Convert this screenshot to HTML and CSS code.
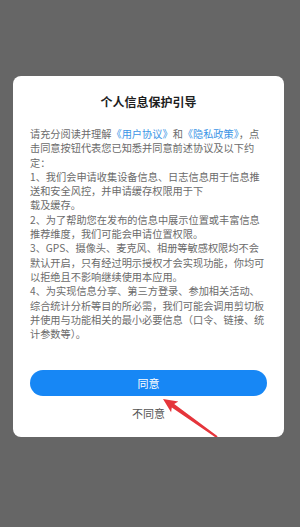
FILE: index.html
```html
<!DOCTYPE html>
<html lang="zh-CN">
<head>
<meta charset="utf-8">
<title>个人信息保护引导</title>
<link rel="stylesheet" href="styles.css">
</head>
<body>
<div class="dialog">
  <h1 class="title">个人信息保护引导</h1>
  <p class="content">请充分阅读并理解<span class="link">《用户协议》</span>和<span class="link">《隐私政策》</span>，点<br>击同意按钮代表您已知悉并同意前述协议及以下约<br>定：<br>1、我们会申请收集设备信息、日志信息用于信息推<br>送和安全风控，并申请缓存权限用于下<br>载及缓存。<br>2、为了帮助您在发布的信息中展示位置或丰富信息<br>推荐维度，我们可能会申请位置权限。<br>3、GPS、摄像头、麦克风、相册等敏感权限均不会<br>默认开启，只有经过明示授权才会实现功能，你均可<br>以拒绝且不影响继续使用本应用。<br>4、为实现信息分享、第三方登录、参加相关活动、<br>综合统计分析等目的所必需，我们可能会调用剪切板<br>并使用与功能相关的最小必要信息（口令、链接、统<br>计参数等）。</p>
  <button class="agree">同意</button>
  <div class="disagree">不同意</div>
  <svg class="arrow" width="271" height="361" viewBox="0 0 271 361">
    <polygon points="150,323 165.3,325.6 161.2,327.9 204.6,360.2 203.4,362 158.8,331.5 158.1,336.2" fill="#e5353b"/>
  </svg>
</div>
</body>
</html>
```

FILE: styles.css
```css
html, body {
  margin: 0;
  padding: 0;
}
body {
  background: #666666;
  width: 300px;
  height: 527px;
  font-family: "Noto Sans CJK SC", "Noto Sans", sans-serif;
}
.dialog {
  position: relative;
  overflow: hidden;
  box-sizing: border-box;
  margin: 76px 0 0 13px;
  width: 271px;
  height: 361px;
  background: #ffffff;
  border-radius: 8px;
  padding: 18px 17px 0;
  display: flex;
  flex-direction: column;
  align-items: stretch;
}
.title {
  margin: 0;
  font-size: 12px;
  line-height: 16px;
  font-weight: bold;
  color: #1e1e1e;
  text-align: center;
}
.content {
  margin: 17px 0 0;
  font-size: 10.2px;
  line-height: 14.3px;
  color: #6b6b6b;
  white-space: nowrap;
}
.link {
  color: #3b95e6;
}
.agree {
  margin-top: 29px;
  height: 26px;
  border: none;
  border-radius: 13px;
  background: #1787f5;
  color: #ffffff;
  font-family: inherit;
  font-size: 11px;
  padding: 0;
}
.disagree {
  margin-top: 10px;
  text-align: center;
  font-size: 11px;
  line-height: 14px;
  color: #555555;
}
.arrow {
  position: absolute;
  left: 0;
  top: 0;
  pointer-events: none;
}
```
